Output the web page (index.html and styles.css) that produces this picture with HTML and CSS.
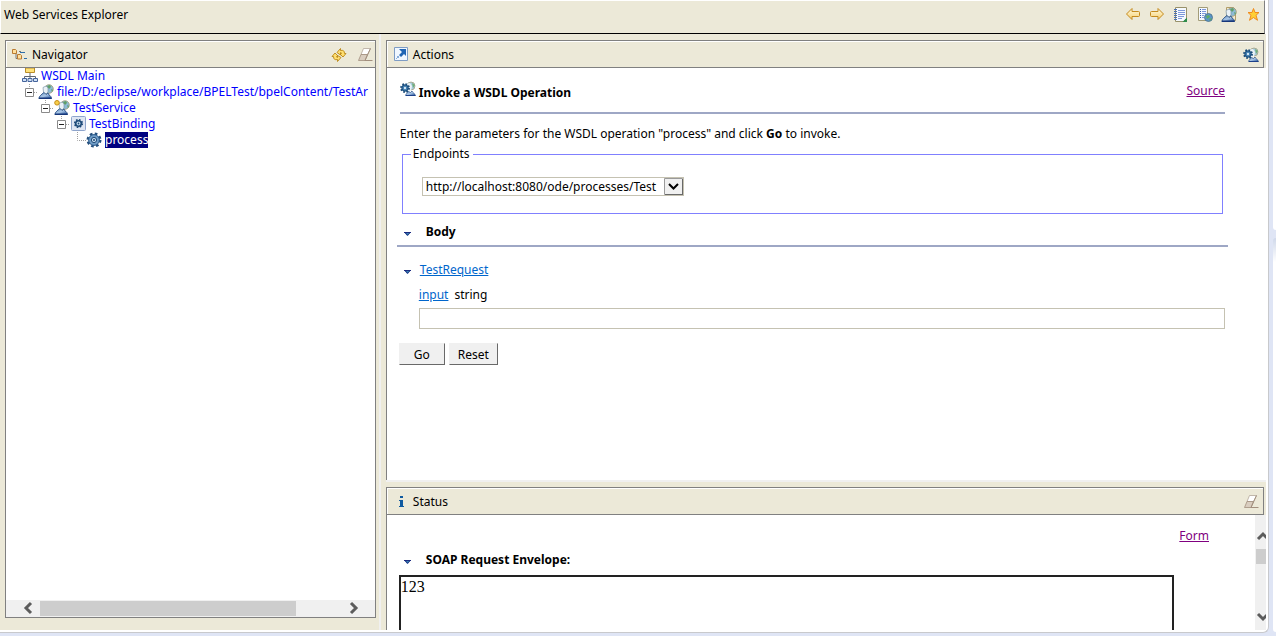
FILE: index.html
```html
<!DOCTYPE html>
<html lang="en">
<head>
<meta charset="utf-8">
<title>Web Services Explorer</title>
<link rel="stylesheet" href="styles.css">
</head>
<body>
<svg class="defs" aria-hidden="true">
  <defs>
    <linearGradient id="blue" x1="0" y1="0" x2="1" y2="1"><stop offset="0" stop-color="#5f8ab8"/><stop offset=".5" stop-color="#a9c6e6"/><stop offset="1" stop-color="#1c4a94"/></linearGradient>
    <linearGradient id="gold" x1="0" y1="0" x2="0" y2="1"><stop offset="0" stop-color="#fffbe0"/><stop offset="1" stop-color="#f6cf70"/></linearGradient>
    <symbol id="person" viewBox="0 0 16 16">
      <circle cx="11" cy="5" r="4.300" fill="#8dbbd6" stroke="#a29b72" stroke-width=".8"/>
      <path d="M9 2l3-1 1 2-2 2zM13 5l2 1-1 2z" fill="#5f9f66"/>
      <path d="M5 3.500 8 2l2 2v4L8 10 5.500 8z" fill="#e9f1f6" stroke="#7f97a8" stroke-width=".7"/>
      <path d="M.8 14.500c.5-2.500 2-3 3.200-4.500l2-1.500 2 2L10 9l1 2c1.500.5 2.300 2 2.500 3.500z" fill="url(#blue)" stroke="#2b5288" stroke-width=".9"/>
      <path d="M1 13.500h12.500V15H1z" fill="#17377b"/>
    </symbol>
    <symbol id="gear" viewBox="0 0 16 16">
      <circle cx="8" cy="8" r="6.200" fill="none" stroke="#244f7d" stroke-width="2.600" stroke-dasharray="2.600 2.270"/>
      <circle cx="8" cy="8" r="5.400" fill="#6f9cc6" stroke="#2b5b8c"/>
      <circle cx="8" cy="8" r="2.600" fill="#c8def0" stroke="#1f4a78"/>
      <circle cx="8" cy="8" r="1" fill="#1f4a78"/>
    </symbol>
    <symbol id="invoke" viewBox="0 0 16 16">
      <circle cx="11" cy="5" r="4" fill="#a8cbdf" stroke="#a29b72" stroke-width=".7"/>
      <path d="M12 2l3 2-2 3z" fill="#6fae78"/>
      <path d="M7 2.500 10 2l2 3-1 5-3 1z" fill="#eaf2f7"/>
      <path d="M5.500 14.500c.5-2 2-2.500 3-4l2 1 1.500-1.500c0 1.500 3 2 3.300 4.500z" fill="url(#blue)" stroke="#2b5288" stroke-width=".7"/>
      <path d="M6 14h9.500v1H6z" fill="#1b3f8a"/>
      <circle cx="5" cy="7" r="3.900" fill="none" stroke="#174a78" stroke-width="2" stroke-dasharray="1.600 1.460"/>
      <circle cx="5" cy="7" r="3.200" fill="#3f7cae" stroke="#174a78"/>
      <circle cx="5" cy="7" r="1.200" fill="#d6e8f5"/>
    </symbol>
    <symbol id="eraser" viewBox="0 0 16 16">
      <path d="M6.500 1.500h7l-3 6H4z" fill="#fff" stroke="#b4a79a" stroke-width=".8"/>
      <path d="M4 7.500h6.500L8 13.500H1.500z" fill="#d9cdbf" stroke="#a28f7e" stroke-width=".8"/>
      <path d="M13.500 1.500 8 13.500" stroke="#a28f7e"/>
      <path d="M8 13.500h7.500" stroke="#a28f7e"/>
    </symbol>
    <symbol id="minus" viewBox="0 0 16 16">
      <path d="M7.500 0v4M12 8.500h4" stroke="#a0a0a0" stroke-dasharray="1 1"/>
      <path d="M3.500 4.500h8v8h-8z" fill="#fff" stroke="#8a8a8a"/>
      <path d="M5 8.500h5" stroke="#222"/>
    </symbol>
    <symbol id="twisty" viewBox="0 0 8 4">
      <path d="M0 0h7L3.500 4z" fill="#3a86b4"/><path d="M0 0h7v1H0z" fill="#1a2a80"/><path d="M0 0h1l3 3-.5 1zM7 0H6L3.500 3v1z" fill="#1a2a80"/>
    </symbol>
    <symbol id="arrow" viewBox="0 0 16 16">
      <path d="M1.500 7 7 1.500v3h6.500q1 0 1 1v3q0 1-1 1H7v3z" fill="url(#gold)" stroke="#c48a1e"/>
    </symbol>
  </defs>
</svg>
<div class="window">
  <header class="topbar">
    <h1 class="topbar-title">Web Services Explorer</h1>
    <nav class="tools" aria-label="Explorer tools">
      <button class="tool" aria-label="Back"><svg class="icon" viewBox="0 0 16 16"><use href="#arrow"/></svg></button>
      <button class="tool" aria-label="Forward"><svg class="icon flip" viewBox="0 0 16 16"><use href="#arrow"/></svg></button>
      <button class="tool" aria-label="UDDI page"><svg class="icon" viewBox="0 0 16 16">
        <path d="M2.500.500h11v11l-3 3h-8z" fill="#f5f9ff" stroke="#98916a"/>
        <path d="M1 2.500h3M1 4.500h3M1 6.500h3M1 8.500h3M1 10.500h3M1 12.500h3" stroke="#4b6fae"/>
        <path d="M5 3.500h7M5 5.500h7M5 7.500h7M5 9.500h6M5 11.500h4" stroke="#5e7fd0" stroke-width=".8"/>
        <path d="M14 10.500V15H9.500z" fill="#2e8b4a"/></svg></button>
      <button class="tool" aria-label="WSIL page"><svg class="icon" viewBox="0 0 16 16">
        <path d="M1.500.500h9v13h-9z" fill="#f5f9ff" stroke="#a39c78"/>
        <path d="M3 2.500h1M3 4.500h1M3 6.500h1M3 8.500h1M3 10.500h1" stroke="#3558a8"/>
        <path d="M5 2.500h4M5 4.500h4M5 6.500h4M5 8.500h2M5 10.500h2" stroke="#5e7fd0" stroke-width=".8"/>
        <circle cx="11.500" cy="10.500" r="4" fill="#5a94c8" stroke="#4a6f86" stroke-width=".8"/>
        <path d="M9 9l3-1 1 2-3 2zM12 12l3-1-2 3z" fill="#5fae62"/></svg></button>
      <button class="tool" aria-label="WSDL page"><svg class="icon" viewBox="0 0 16 16">
        <path d="M5.500.500h7l2 2v11h-9z" fill="#f3ead0" stroke="#b19d68"/><use href="#person"/></svg></button>
      <button class="tool" aria-label="Favorites"><svg class="icon" viewBox="0 0 16 16">
        <path d="M8.500 1.500 10 5.500h4L11 8.300l1.500 5L8.500 10.500l-4 2.800 1.500-5L3 5.500h4z" fill="#ffcf35" stroke="#f08a1d"/></svg></button>
    </nav>
  </header>

  <main class="frames">
    <section class="frame navigator" aria-labelledby="nav-title">
      <div class="titlebar">
        <svg class="icon" viewBox="0 0 16 16">
          <path d="M4 6v5.500h3M7 4.500h2" stroke="#777" fill="none"/>
          <path d="M8 5.500h5M12 11.500h3" stroke="#2f6ea8"/>
          <path d="M.5 2.500h3l1 1v3h-4zM5.500 7.500h3l1 1v3.500h-4z" fill="#ffdf9c" stroke="#b97a30"/></svg>
        <h2 class="titlebar-text" id="nav-title">Navigator</h2>
        <button class="tool" aria-label="Refresh"><svg class="icon" viewBox="0 0 16 16">
          <path d="M6 5.500 9.500 1.500v2q4-1 4 3h1.500l-3 3.500-3-3 1.500-.5q0-1-1-1v2.500zM10 10.500 6.500 14.500v-2q-4 1-4-3H1L4 6l3 3-1.500.5q0 1 1 1V8.500z" fill="#ffdf70" stroke="#b98716" stroke-width=".9"/></svg></button>
        <button class="tool" aria-label="Clear"><svg class="icon" viewBox="0 0 16 16"><use href="#eraser"/></svg></button>
      </div>
      <div class="tree-pane">
        <ul class="tree">
          <li class="node"><svg class="icon" viewBox="0 0 16 16">
              <path d="M8 5v6M2.500 11V8.500h11V11" stroke="#5f6670" fill="none"/>
              <path d="M3.500 0h9v4.500h-9z" fill="#ffe27a" stroke="#b98d28"/>
              <path d="M.5 10.500h4v3h-4zM6 10.500h4v3H6zM11.500 10.500h4v3h-4z" fill="#cfe0f5" stroke="#45649c"/></svg>
            <a class="node-link" href="#main">WSDL Main</a></li>
          <li class="node"><svg class="icon" viewBox="0 0 16 16"><use href="#minus"/></svg><svg class="icon" viewBox="0 0 16 16"><use href="#person"/></svg>
            <a class="node-link" href="#file">file:/D:/eclipse/workplace/BPELTest/bpelContent/TestAr</a></li>
          <li class="node level-2"><svg class="icon" viewBox="0 0 16 16"><use href="#minus"/></svg><svg class="icon" viewBox="0 0 16 16"><use href="#person"/><circle cx="3" cy="2.800" r="2.300" fill="#f7cf4a" stroke="#c58c18"/></svg>
            <a class="node-link" href="#service">TestService</a></li>
          <li class="node level-3"><svg class="icon" viewBox="0 0 16 16"><use href="#minus"/></svg><svg class="icon" viewBox="0 0 16 16"><rect x="1.500" y=".5" width="14" height="14" rx="1" fill="#dfe6f3" stroke="#8fa5cc"/><circle cx="8.500" cy="7.500" r="3.800" fill="none" stroke="#1d4a78" stroke-width="1.600" stroke-dasharray="1.600 1.380"/><circle cx="8.500" cy="7.500" r="2.800" fill="#c8def0" stroke="#1d4a78" stroke-width="1.600"/><circle cx="8.500" cy="7.500" r=".9" fill="#1d4a78"/></svg>
            <a class="node-link" href="#binding">TestBinding</a></li>
          <li class="node level-4"><svg class="icon" viewBox="0 0 16 16"><path d="M7.500 0v8.500H16" stroke="#a0a0a0" stroke-dasharray="1 1" fill="none"/></svg><svg class="icon" viewBox="0 0 16 16"><use href="#gear"/></svg>
            <a class="node-link selected" href="#process">process</a></li>
        </ul>
        <div class="hscroll" aria-hidden="true">
          <svg class="icon" viewBox="0 0 16 16"><path d="m12 3-5 5 5 5" fill="none" stroke="#5c5c5c" stroke-width="3"/></svg>
          <div class="htrack"><div class="hthumb"></div></div>
          <svg class="icon" viewBox="0 0 16 16"><path d="m5 3 5 5-5 5" fill="none" stroke="#5c5c5c" stroke-width="3"/></svg>
        </div>
      </div>
    </section>

    <div class="right">
      <section class="frame actions" aria-labelledby="act-title">
        <div class="titlebar">
          <svg class="icon" viewBox="0 0 16 16"><path d="M1.500.500h13v13h-13z" fill="#f0f7ff" stroke="#7e9cc4"/><path d="M6 2h7v7l-2-2-3 3-2-2 3-3zM5 9l1 1-1 1-1-1zM3 11l1 1H3z" fill="#2065b4"/></svg>
          <h2 class="titlebar-text" id="act-title">Actions</h2>
          <button class="tool" aria-label="Invoke operation"><svg class="icon" viewBox="0 0 16 16"><use href="#invoke"/></svg></button>
        </div>
        <form class="actions-body">
          <div class="heading">
            <svg class="icon" viewBox="0 0 16 16"><use href="#invoke"/></svg>
            <h3 class="heading-text">Invoke a WSDL Operation</h3>
            <a class="visited" href="#source">Source</a>
          </div>
          <p class="intro">Enter the parameters for the WSDL operation "process" and click <b>Go</b> to invoke.</p>
          <fieldset class="endpoints">
            <legend class="legend">Endpoints</legend>
            <div class="select-box">
              <select class="select" aria-label="Endpoints"><option>http://localhost:8080/ode/processes/Test</option></select>
              <svg class="select-arrow" viewBox="0 0 19 17"><path d="M.5.500h18v16H.5z" fill="#f0f0f0" stroke="#9a9a9a"/><path d="M1 16.500h18M18.500 1v16" stroke="#696969"/><path d="m5 6 4.500 4.500L14 6" fill="none" stroke="#000" stroke-width="2"/></svg>
            </div>
          </fieldset>
          <div class="section-head">
            <svg class="twisty" viewBox="0 0 8 4"><use href="#twisty"/></svg><h3 class="section-text">Body</h3>
          </div>
          <div class="request">
            <svg class="twisty" viewBox="0 0 8 4"><use href="#twisty"/></svg><a class="link" href="#request">TestRequest</a>
          </div>
          <div class="field">
            <label class="field-label" for="value"><a class="link" href="#input">input</a><span>string</span></label>
            <input class="field-input" id="value" type="text">
          </div>
          <div class="buttons">
            <button class="btn" type="button">Go</button>
            <button class="btn" type="reset">Reset</button>
          </div>
        </form>
      </section>

      <section class="frame status" aria-labelledby="status-title">
        <div class="titlebar">
          <svg class="icon" viewBox="0 0 16 16"><path d="M7 2h3v2H7zM6 6h4v6h1v1H6v-1h1V7H6z" fill="#0f5aa0"/></svg>
          <h2 class="titlebar-text" id="status-title">Status</h2>
          <button class="tool" aria-label="Clear status"><svg class="icon" viewBox="0 0 16 16"><use href="#eraser"/></svg></button>
        </div>
        <div class="status-body">
          <div class="status-content">
            <a class="visited form-link" href="#form">Form</a>
            <div class="envelope-head">
              <svg class="twisty" viewBox="0 0 8 4"><use href="#twisty"/></svg><h3 class="section-text">SOAP Request Envelope:</h3>
            </div>
            <div class="envelope">123</div>
          </div>
          <div class="vscroll" aria-hidden="true">
            <svg class="varrow" viewBox="0 0 11 16"><path d="m3 12 5-5 5 5" fill="none" stroke="#5c5c5c" stroke-width="3"/></svg>
            <div class="vtrack"><div class="vthumb"></div></div>
            <svg class="varrow" viewBox="0 0 11 16"><path d="m3 5 5 5 5-5" fill="none" stroke="#5c5c5c" stroke-width="3"/></svg>
          </div>
        </div>
      </section>
    </div>
  </main>
</div>
<aside class="edge"><div class="edge-top"></div><div class="edge-bottom"></div></aside>
</body>
</html>
```
FILE: styles.css
```css
* { box-sizing: border-box; }
body {
  margin: 0;
  height: 100vh;
  display: flex;
  gap: 4px;
  overflow: hidden;
  background: #dfe5f5;
  color: #000;
  font: 12px/18px "Noto Sans", "Open Sans", sans-serif;
}
h1, h2, h3, p, ul { margin: 0; padding: 0; font-size: inherit; font-weight: normal; }
h3 { font-weight: bold; }
button, input, select { font: inherit; color: inherit; }
.defs { position: absolute; width: 0; height: 0; }
.icon { width: 16px; height: 16px; flex: none; display: block; }
.flip { transform: scaleX(-1); }
.tool { padding: 0; border: 0; background: none; }

.window {
  flex: 1;
  min-width: 0;
  margin-bottom: 3px;
  padding: 0 2px 2px 0;
  display: flex;
  flex-direction: column;
  background: #fff;
  border: solid #c8c9cc;
  border-width: 0 1px 1px 0;
  border-bottom-right-radius: 6px;
}
.topbar {
  height: 34px;
  flex: none;
  margin-right: 1px;
  padding: 0 3px 4px;
  display: flex;
  align-items: center;
  justify-content: space-between;
  background: #ece9d8;
  border: 1px solid #fff;
  border-right-color: #808080;
  border-bottom-color: #000;
}
.tools { display: flex; gap: 8px; }

.frames { flex: 1; min-height: 0; display: flex; background: #ece9d8; }
.frame { display: flex; flex-direction: column; min-width: 0; min-height: 0; }
.navigator {
  flex: 0 0 calc(30% + 1px);
  padding: 6px 3px 12px 5px;
  border-right: 2px solid #f0f0f0;
}
.right { flex: 1; min-width: 0; display: flex; flex-direction: column; padding-left: 5px; }
.titlebar {
  height: 28px;
  flex: none;
  padding: 2px 2px 0 6px;
  display: flex;
  align-items: center;
  gap: 4px;
  border: 1px solid #808080;
  box-shadow: inset 1px 1px #fff;
}
.titlebar-text { flex: 1; }
.titlebar .tool + .tool { margin-left: 6px; }

.tree-pane {
  flex: 1;
  min-height: 0;
  display: flex;
  flex-direction: column;
  justify-content: space-between;
  background: #fff;
  border: solid #808080;
  border-width: 0 1px 1px;
}
.tree { list-style: none; overflow: hidden; padding-left: 16px; }
.node { height: 16px; display: flex; align-items: center; white-space: nowrap; line-height: 16px; }
.level-2 { padding-left: 16px; }
.level-3 { padding-left: 32px; }
.level-4 { padding-left: 48px; }
.node-link { margin-left: 3px; color: #00f; text-decoration: none; }
.selected { background: #000080; color: #fff; }

.hscroll { height: 17px; padding: 0 13px; display: flex; background: #f0f0f0; }
.htrack { flex: 1; padding: 1px 5px; }
.hthumb { width: 85%; height: 15px; background: #cdcdcd; }

.actions { flex: 1; min-height: 0; padding-top: 6px; border-bottom: 2px solid #f0f0f0; }
.actions .titlebar, .status .titlebar { margin-right: 2px; padding-right: 4px; }
.actions-body { flex: 1; padding: 13px 41px 0 13px; background: #fff; border-left: 1px solid #808080; }
.heading { display: flex; gap: 3px; padding-bottom: 7px; border-bottom: 2px solid #9ea7c5; }
.heading-text { flex: 1; line-height: 24px; }
.visited { color: #800080; line-height: 20px; }
.link { color: #0066cc; }
.intro { margin-top: 11px; }
.endpoints { margin: 3px 2px 0; padding: 15px 19px 17px; border: 1px solid #8080ff; }
.legend { margin-left: -11px; padding: 0 3px 0 2px; line-height: 16px; }
.select-box { position: relative; width: 262px; }
.select {
  display: block;
  width: 100%;
  height: 19px;
  padding: 0 20px 0 3px;
  appearance: none;
  background: #fff;
  border: 1px solid #c5c2b2;
  border-radius: 0;
  line-height: 17px;
}
.select-arrow { position: absolute; top: 1px; right: 1px; width: 19px; height: 17px; pointer-events: none; }
.twisty { width: 8px; height: 4px; flex: none; margin-top: 3px; }
.section-head {
  display: flex;
  align-items: center;
  gap: 14px;
  margin: 9px -3px 0;
  padding: 0 0 4px 7px;
  border-bottom: 2px solid #9ea7c5;
}
.request { display: flex; align-items: center; gap: 8px; margin-top: 14px; padding-left: 4px; }
.field { margin: 7px 0 0 19px; }
.field-label { display: flex; gap: 6px; }
.field-input { display: block; width: 100%; height: 21px; margin-top: 4px; border: 1px solid #c5c2b2; background: #fff; }
.buttons { display: flex; gap: 4px; margin: 14px 0 0 -1px; }
.btn {
  min-width: 46px;
  height: 22px;
  padding: 2px 8px 0;
  background: #f0f0f0;
  border: 1px solid #f0f0f0;
  border-right-color: #696969;
  border-bottom-color: #696969;
}

.status { flex: 0 0 148px; padding-top: 5px; }
.status-body { flex: 1; min-height: 0; display: flex; background: #fff; border-left: 1px solid #808080; }
.status-content { flex: 1; padding: 11px 46px 0 12px; overflow: hidden; }
.form-link { display: block; width: fit-content; margin-left: auto; }
.envelope-head { display: flex; align-items: center; gap: 14px; margin-top: 5px; padding-left: 5px; }
.envelope {
  height: 90px;
  margin: 6px 35px 0 0;
  border: 2px solid #222;
  font: 16px/20px "Liberation Serif", serif;
}
.vscroll { width: 11px; display: flex; flex-direction: column; padding: 12px 0 5px; background: #f0f0f0; }
.varrow { width: 11px; height: 16px; flex: none; }
.vtrack { flex: 1; padding: 6px 0 0 1px; }
.vthumb { height: 15px; background: #cdcdcd; }

.edge { width: 3px; display: flex; flex-direction: column; gap: 8px; padding-bottom: 4px; }
.edge-top { flex: 0 0 230px; background: #fff; border-bottom-left-radius: 3px; }
.edge-bottom { flex: 1; background: linear-gradient(#cfd8ea, #fff 24px); border-radius: 3px 0 0 3px; }
```
